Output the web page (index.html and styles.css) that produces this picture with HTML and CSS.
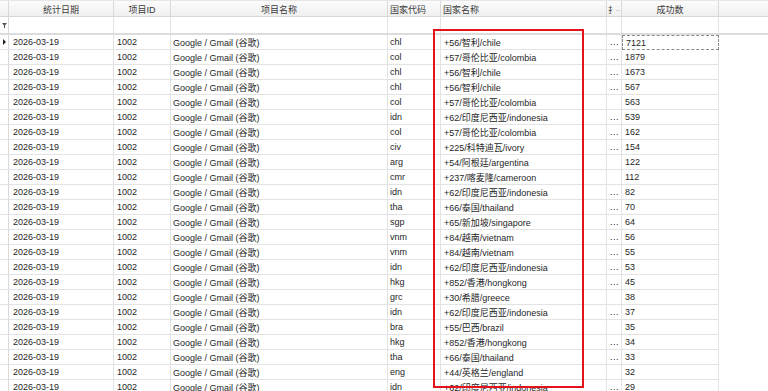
FILE: index.html
```html
<!DOCTYPE html>
<html lang="zh-CN">
<head>
<meta charset="utf-8">
<title>统计</title>
<link rel="stylesheet" href="styles.css">
</head>
<body>
<div class="grid">
  <div class="row head">
    <div class="c ind"></div>
    <div class="c ctr">统计日期</div>
    <div class="c ctr">项目ID</div>
    <div class="c ctr">项目名称</div>
    <div class="c">国家代码</div>
    <div class="c">国家名称</div>
    <div class="c clip">扌<span class="tiny">...</span></div>
    <div class="c ctr">成功数</div>
    <div class="c fill"></div>
  </div>
  <div class="row filter">
    <div class="c ind"><svg width="5" height="5" viewBox="0 0 5 5"><path d="M0 0H5L3 2.5V5H2V2.5Z" fill="#555"/></svg></div>
    <div class="c"></div><div class="c"></div><div class="c"></div><div class="c"></div><div class="c"></div><div class="c"></div><div class="c"></div>
    <div class="c fill"></div>
  </div>
  <div class="body" id="body"></div>
  <div class="mark"></div>
</div>
<script>
const data = [
 ["chl","+56/智利/chile",7121,1],
 ["col","+57/哥伦比亚/colombia",1879,1],
 ["chl","+56/智利/chile",1673,1],
 ["chl","+56/智利/chile",567,1],
 ["col","+57/哥伦比亚/colombia",563,0],
 ["idn","+62/印度尼西亚/indonesia",539,1],
 ["col","+57/哥伦比亚/colombia",162,1],
 ["civ","+225/科特迪瓦/ivory",154,1],
 ["arg","+54/阿根廷/argentina",122,0],
 ["cmr","+237/喀麦隆/cameroon",112,0],
 ["idn","+62/印度尼西亚/indonesia",82,1],
 ["tha","+66/泰国/thailand",70,1],
 ["sgp","+65/新加坡/singapore",64,1],
 ["vnm","+84/越南/vietnam",56,1],
 ["vnm","+84/越南/vietnam",55,1],
 ["idn","+62/印度尼西亚/indonesia",53,1],
 ["hkg","+852/香港/hongkong",45,1],
 ["grc","+30/希腊/greece",38,0],
 ["idn","+62/印度尼西亚/indonesia",37,1],
 ["bra","+55/巴西/brazil",35,0],
 ["hkg","+852/香港/hongkong",34,1],
 ["tha","+66/泰国/thailand",33,1],
 ["eng","+44/英格兰/england",32,0],
 ["idn","+62/印度尼西亚/indonesia",29,1]
];
const body = document.getElementById('body');
data.forEach((d, i) => {
  const r = document.createElement('div');
  r.className = 'row data';
  r.innerHTML =
    '<div class="c ind">' + (i === 0 ? '<span class="tri"></span>' : '') + '</div>' +
    '<div class="c p4">2026-03-19</div>' +
    '<div class="c p3">1002</div>' +
    '<div class="c p2">Google / Gmail (谷歌)</div>' +
    '<div class="c p2">' + d[0] + '</div>' +
    '<div class="c p3">' + d[1] + '</div>' +
    '<div class="c dots">' + (d[3] ? '...' : '') + '</div>' +
    '<div class="c p3' + (i === 0 ? ' focus' : '') + '">' + d[2] + '</div>' +
    '<div class="c fill"></div>';
  body.appendChild(r);
});
</script>
</body>
</html>
```

FILE: styles.css
```css
html, body {
  margin: 0;
  padding: 0;
  background: #ffffff;
}
body {
  font-family: "Liberation Sans", "Noto Sans CJK SC", sans-serif;
  font-size: 9px;
  color: #262626;
  overflow: hidden;
}
.grid {
  position: relative;
  width: 768px;
}
.row {
  display: grid;
  grid-template-columns: 9px 105px 57px 217px 53px 166px 15px 97px 1fr;
}
.c {
  box-sizing: border-box;
  border-right: 1px solid #e3e3e3;
  border-bottom: 1px solid #e3e3e3;
  white-space: nowrap;
  overflow: hidden;
  display: flex;
  align-items: center;
  padding-left: 2px;
}
.head {
  height: 17px;
  border-top: 1px solid #e6e6e6;
  box-sizing: border-box;
  background: linear-gradient(#fbfbfb, #efefef);
  color: #3a3a3a;
}
.head .c {
  border-right-color: #d9d9d9;
  border-bottom-color: #d6d6d6;
  padding-top: 1px;
}
.head .fill {
  border-right: none;
}
.ctr {
  justify-content: center;
  padding-left: 0;
}
.clip {
  padding-left: 1px;
  font-size: 8px;
}
.tiny {
  font-size: 5px;
  letter-spacing: -0.3px;
  color: #555;
}
.filter {
  height: 16px;
  border-bottom: 2px solid #dcdcdc;
}
.filter .c {
  border-bottom: none;
}
.filter .fill, .data .fill {
  border-right: none;
  border-bottom: none;
}
.filter .ind {
  justify-content: center;
  padding: 0;
}
.data {
  height: 15px;
}
.ind {
  padding: 0;
  justify-content: center;
  border-right-color: #d9d9d9;
}
.tri {
  width: 0;
  height: 0;
  border-top: 3px solid transparent;
  border-bottom: 3px solid transparent;
  border-left: 3px solid #222;
}
.p4 { padding-left: 4px; }
.p3 { padding-left: 3px; }
.p2 { padding-left: 2px; }
.dots {
  padding-left: 3px;
  letter-spacing: 0.5px;
}
.focus {
  border: 1px dashed #8a8a8a;
}
.mark {
  position: absolute;
  left: 433px;
  top: 29px;
  width: 151px;
  height: 359px;
  box-sizing: border-box;
  border: 2px solid #e3131b;
  pointer-events: none;
}
```
